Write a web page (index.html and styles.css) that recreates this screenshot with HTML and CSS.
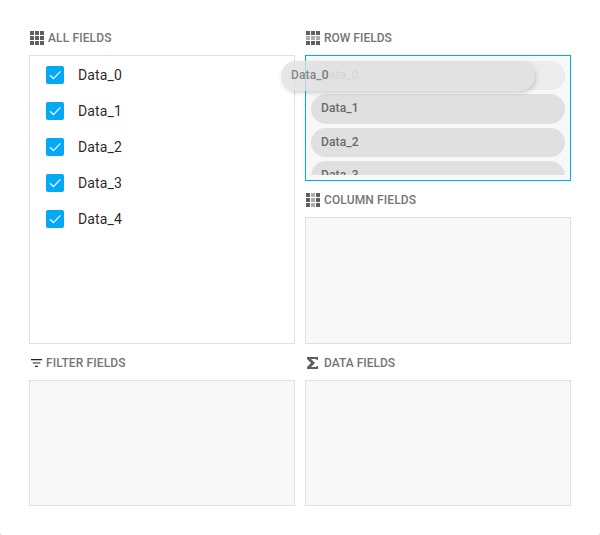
FILE: index.html
```html
<!DOCTYPE html>
<html lang="en">
<head>
<meta charset="utf-8">
<title>Field Chooser</title>
<link rel="stylesheet" href="styles.css">
</head>
<body>
<main class="chooser">
  <div class="column">
    <section class="area area-all">
      <h2 class="title title-wide"><svg class="icon" width="14" height="14" viewBox="0 0 14 14"><path fill="#5f5f61" d="M0 0h4v4H0zM5 0h4v4H5zM10 0h4v4h-4zM0 5h4v4H0zM5 5h4v4H5zM10 5h4v4h-4zM0 10h4v4H0zM5 10h4v4H5zM10 10h4v4h-4z"/></svg><span>ALL FIELDS</span></h2>
      <ul class="box list">
        <li class="item"><span class="check"><svg width="18" height="18" viewBox="0 0 18 18"><path d="M4.1 9.3l3.3 3.3 7.1-7.2"/></svg></span>Data_0</li>
        <li class="item"><span class="check"><svg width="18" height="18" viewBox="0 0 18 18"><path d="M4.1 9.3l3.3 3.3 7.1-7.2"/></svg></span>Data_1</li>
        <li class="item"><span class="check"><svg width="18" height="18" viewBox="0 0 18 18"><path d="M4.1 9.3l3.3 3.3 7.1-7.2"/></svg></span>Data_2</li>
        <li class="item"><span class="check"><svg width="18" height="18" viewBox="0 0 18 18"><path d="M4.1 9.3l3.3 3.3 7.1-7.2"/></svg></span>Data_3</li>
        <li class="item"><span class="check"><svg width="18" height="18" viewBox="0 0 18 18"><path d="M4.1 9.3l3.3 3.3 7.1-7.2"/></svg></span>Data_4</li>
      </ul>
    </section>
    <section class="area">
      <h2 class="title title-wide"><svg class="icon" width="12" height="14" viewBox="0 0 12 14"><path fill="#222" d="M1 3h11v1.2H1zM2.7 6.4h7.6v1.2H2.7zM5.1 9.8h2.8V11H5.1z"/></svg><span>FILTER FIELDS</span></h2>
      <div class="box"></div>
    </section>
  </div>
  <div class="column">
    <section class="area">
      <h2 class="title"><svg class="icon" width="14" height="14" viewBox="0 0 14 14"><path fill="#5f5f61" d="M0 0h4v4H0zM5 0h4v4H5zM10 0h4v4h-4zM0 10h4v4H0zM5 10h4v4H5zM10 10h4v4h-4z"/><path fill="#adadaf" d="M0 5h4v4H0zM5 5h4v4H5zM10 5h4v4h-4z"/></svg><span>ROW FIELDS</span></h2>
      <div class="box box-active">
        <div class="chips">
          <div class="chip chip-source">Data_0</div>
          <div class="chip">Data_1</div>
          <div class="chip">Data_2</div>
          <div class="chip">Data_3</div>
        </div>
        <div class="chip chip-drag">Data_0</div>
      </div>
    </section>
    <section class="area area-column">
      <h2 class="title title-wide"><svg class="icon" width="14" height="14" viewBox="0 0 14 14"><path fill="#5f5f61" d="M0 0h4v4H0zM10 0h4v4h-4zM0 5h4v4H0zM10 5h4v4h-4zM0 10h4v4H0zM10 10h4v4h-4z"/><path fill="#adadaf" d="M5 0h4v4H5zM5 5h4v4H5zM5 10h4v4H5z"/></svg><span>COLUMN FIELDS</span></h2>
      <div class="box"></div>
    </section>
    <section class="area">
      <h2 class="title"><svg class="icon" width="14" height="14" viewBox="0 0 14 14"><path fill="#5f5f61" d="M1 1h11v3h-1.2l-.6-1H5l4 4-4 4h5.2l.6-1H12v3H1v-2l4-4-4-4z"/></svg><span>DATA FIELDS</span></h2>
      <div class="box"></div>
    </section>
  </div>
</main>
</body>
</html>
```
FILE: styles.css
```css
* { box-sizing: border-box; }
html { background: #c4c4c4; }
body { margin: 0; font-family: Roboto, sans-serif; }
.chooser {
  display: flex;
  gap: 10px;
  height: 535px;
  padding: 20px 29px 29px;
  background: #fff;
  border-radius: 0 0 2px 2px;
}
.column { display: flex; flex-direction: column; flex: 1; }
.area { display: flex; flex-direction: column; height: 162px; }
.area:first-child { height: 161px; }
.area.area-all { height: 324px; }
.area-column { height: 163px; }
.title {
  display: flex;
  align-items: center;
  flex: none;
  height: 36px;
  margin: 0;
  padding: 2px 0 0 1px;
  font-size: 12px;
  font-weight: 500;
  line-height: 16px;
  color: #757575;
}
.title-wide { letter-spacing: .13px; }
.area:first-child .title { height: 35px; padding-top: 0; }
.icon { margin-right: 4px; }
.box {
  flex: 1;
  margin: 0;
  border: 1px solid #e0e0e0;
  background: #f8f8f8;
}
.list { padding: 1px 16px; background: #fff; list-style: none; }
.item {
  display: flex;
  align-items: center;
  height: 36px;
  font-size: 14px;
  letter-spacing: .15px;
  color: rgba(0, 0, 0, .87);
}
.check {
  width: 18px;
  height: 18px;
  margin-right: 14px;
  border-radius: 2px;
  background: #03a9f4;
}
.check svg { display: block; }
.check path { fill: none; stroke: #fff; stroke-width: 1.3; }
.box-active {
  position: relative;
  min-height: 0;
  padding: 5px;
  border-color: #03a9f4;
}
.chips { height: 114px; margin-top: -.4px; overflow: hidden; }
.chip {
  height: 29.58px;
  margin-bottom: 4px;
  padding: 7px 10px;
  border-radius: 15px;
  background: #e0e0e0;
  font-size: 12px;
  font-weight: 500;
  line-height: 14px;
  letter-spacing: .13px;
  color: #6a6a6a;
}
.chip-source { opacity: .5; }
.chip-drag {
  position: absolute;
  top: 5px;
  left: -25px;
  width: 254px;
  opacity: .8;
  box-shadow: 1px 2px 4px rgba(0, 0, 0, .2);
}
```
